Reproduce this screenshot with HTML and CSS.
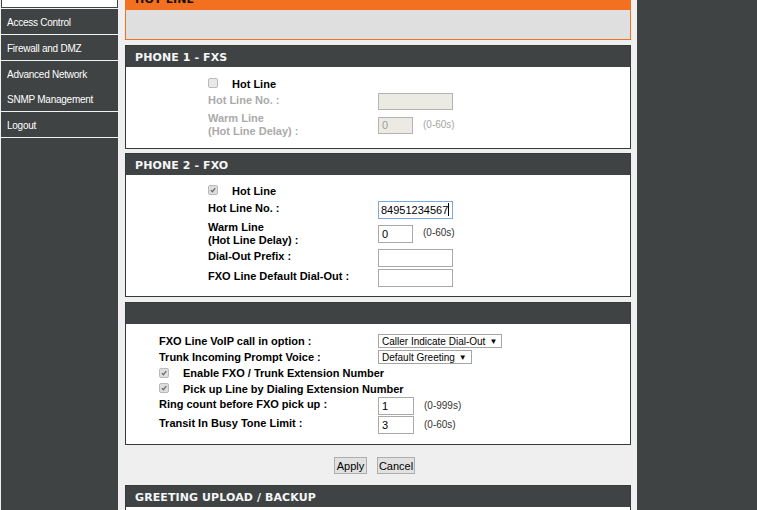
FILE: index.html
```html
<!DOCTYPE html>
<html lang="en">
<head>
<meta charset="utf-8">
<title>Hot Line</title>
<link rel="stylesheet" href="styles.css">
</head>
<body>
<div class="page">
  <nav class="sidebar">
    <div class="nav-cur"></div>
    <a class="nav-item">Access Control</a>
    <a class="nav-item">Firewall and DMZ</a>
    <div class="nav-group">
      <a class="nav-sub">Advanced Network</a>
      <a class="nav-sub">SNMP Management</a>
    </div>
    <a class="nav-item nav-last">Logout</a>
  </nav>

  <main class="content">
    <section class="hot">
      <div class="hot-head"><span>HOT LINE</span></div>
      <div class="hot-body"></div>
    </section>

    <section class="sec sec-p1">
      <h2 class="sec-head">PHONE 1 - FXS</h2>
      <div class="sec-body body-p1">
        <div class="row h16">
          <div class="chk-line"><span class="cb"></span><span class="chk-text">Hot Line</span></div>
        </div>
        <div class="row h18">
          <span class="lbl dis">Hot Line No. :</span>
          <span class="inp inp-dis w76 h17"></span>
        </div>
        <div class="row h29">
          <span class="lbl dis two">Warm Line<br>(Hot Line Delay) :</span>
          <span class="inp inp-dis w35 h17">0</span>
          <span class="hint dis">(0-60s)</span>
        </div>
      </div>
    </section>

    <section class="sec sec-p2">
      <h2 class="sec-head">PHONE 2 - FXO</h2>
      <div class="sec-body body-p2">
        <div class="row h16">
          <div class="chk-line"><span class="cb cb-on"><svg viewBox="0 0 10 10" width="10" height="10"><path d="M2.3 5.2 L4.2 7.1 L7.8 2.6" fill="none" stroke="#6a6a6a" stroke-width="1.6"/></svg></span><span class="chk-text">Hot Line</span></div>
        </div>
        <div class="row h20">
          <span class="lbl">Hot Line No. :</span>
          <span class="inp inp-focus w76">84951234567<span class="caret"></span></span>
        </div>
        <div class="row h28">
          <span class="lbl two">Warm Line<br>(Hot Line Delay) :</span>
          <span class="inp w35">0</span>
          <span class="hint">(0-60s)</span>
        </div>
        <div class="row h20">
          <span class="lbl">Dial-Out Prefix :</span>
          <span class="inp w76"></span>
        </div>
        <div class="row h20">
          <span class="lbl">FXO Line Default Dial-Out :</span>
          <span class="inp w76"></span>
        </div>
      </div>
    </section>

    <section class="sec sec-p3">
      <h2 class="sec-head"></h2>
      <div class="sec-body body-p3">
        <div class="row row3 h16">
          <span class="lbl">FXO Line VoIP call in option :</span>
          <span class="sel">Caller Indicate Dial-Out<span class="arr">▼</span></span>
        </div>
        <div class="row row3 h16">
          <span class="lbl">Trunk Incoming Prompt Voice :</span>
          <span class="sel">Default Greeting<span class="arr">▼</span></span>
        </div>
        <div class="row row3 h15">
          <div class="chk-line"><span class="cb cb-on"><svg viewBox="0 0 10 10" width="10" height="10"><path d="M2.3 5.2 L4.2 7.1 L7.8 2.6" fill="none" stroke="#6a6a6a" stroke-width="1.6"/></svg></span><span class="chk-text">Enable FXO / Trunk Extension Number</span></div>
        </div>
        <div class="row row3 h16">
          <div class="chk-line"><span class="cb cb-on"><svg viewBox="0 0 10 10" width="10" height="10"><path d="M2.3 5.2 L4.2 7.1 L7.8 2.6" fill="none" stroke="#6a6a6a" stroke-width="1.6"/></svg></span><span class="chk-text">Pick up Line by Dialing Extension Number</span></div>
        </div>
        <div class="row row3 h19">
          <span class="lbl lbl-up">Ring count before FXO pick up :</span>
          <span class="inp w36">1</span>
          <span class="hint">(0-999s)</span>
        </div>
        <div class="row row3 h19">
          <span class="lbl lbl-up">Transit In Busy Tone Limit :</span>
          <span class="inp w36">3</span>
          <span class="hint">(0-60s)</span>
        </div>
      </div>
    </section>

    <div class="buttons">
      <button class="btn w33" type="button">Apply</button>
      <button class="btn w38" type="button">Cancel</button>
    </div>

    <section class="sec sec-greet">
      <h2 class="sec-head">GREETING UPLOAD / BACKUP</h2>
      <div class="sec-body body-greet"></div>
    </section>
  </main>

  <div class="right-pane"></div>
</div>
</body>
</html>
```

FILE: styles.css
```css
html, body {
  margin: 0;
  padding: 0;
  height: 100%;
  overflow: hidden;
}

body {
  background: #efefef;
  font-family: "Liberation Sans", Arial, sans-serif;
  font-size: 11px;
  color: #000;
}

.page {
  display: flex;
  height: 510px;
  align-items: stretch;
}

/* ---------- sidebar ---------- */
.sidebar {
  width: 117px;
  margin-left: 1px;
  background: #404343;
  display: flex;
  flex-direction: column;
}

.nav-cur {
  height: 8px;
  box-sizing: border-box;
  background: #fff;
  border: 1px solid #404343;
  border-top: 0;
}

.nav-item,
.nav-sub {
  display: block;
  height: 25px;
  line-height: 27px;
  padding-left: 6px;
  color: #fff;
  font-size: 10px;
  letter-spacing: -0.25px;
  overflow: hidden;
  white-space: nowrap;
}

.nav-item,
.nav-group {
  border-top: 1px solid #f2f2f2;
}

.nav-last {
  border-bottom: 1px solid #f2f2f2;
}

/* ---------- main column ---------- */
.content {
  width: 506px;
  margin-left: 7px;
  margin-right: 6px;
  flex: none;
}

.right-pane {
  flex: 1;
  background: #404343;
}

/* hot line box (scrolled) */
.hot {
  border: 1px solid #f47021;
  border-top: 0;
  margin-bottom: 5px;
}

.hot-head {
  height: 10px;
  background: #f47021;
  overflow: hidden;
  display: flex;
  align-items: flex-end;
  padding-left: 9px;
}

.hot-head span {
  font-family: "DejaVu Sans", Verdana, sans-serif;
  font-weight: bold;
  font-size: 11px;
  line-height: 11px;
  margin-bottom: 5px;
  letter-spacing: 0.2px;
  color: #111;
}

.hot-body {
  height: 29px;
  background: #dfdfdf;
}

/* sections */
.sec {
  border: 1px solid #363939;
}

.sec-p1 { margin-bottom: 4px; }
.sec-p2 { margin-bottom: 5px; }

.sec-greet {
  border-bottom: 0;
}

.sec-head {
  margin: 0;
  height: 20px;
  padding-top: 1px;
  line-height: 21px;
  background: #404343;
  color: #f4f6f8;
  font-family: "DejaVu Sans", Verdana, sans-serif;
  font-weight: bold;
  font-size: 11px;
  padding-left: 9px;
  letter-spacing: 0.1px;
  overflow: hidden;
}

.sec-body {
  background: #fff;
}

.body-p1 { padding: 9px 0 9px 82px; }
.body-p2 { padding: 8px 0 9px 82px; }
.body-p3 { padding: 9px 0 10px 33px; }
.body-greet { height: 3px; }

/* rows */
.row {
  display: grid;
  grid-template-columns: 170px auto 1fr;
  align-items: center;
}

.row3 {
  grid-template-columns: 219px auto 1fr;
}

.h15 { height: 15px; }
.h16 { height: 16px; }
.h18 { height: 18px; }
.h19 { height: 19px; }
.h20 { height: 20px; }
.h28 { height: 28px; }
.h29 { height: 29px; }

.lbl {
  font-weight: bold;
  font-size: 11px;
  line-height: 13px;
  white-space: nowrap;
  margin-top: -2px;
}

.lbl.two {
  margin-top: 1px;
}

.row3 .lbl {
  margin-top: 0;
}

.row3 .lbl-up {
  margin-top: -3px;
}

.dis {
  color: #aaaaaa;
}

.chk-line {
  grid-column: 1 / 4;
  display: flex;
  align-items: center;
  white-space: nowrap;
}

.row3 .chk-line {
  padding-top: 2px;
}

.cb {
  width: 10px;
  height: 10px;
  box-sizing: border-box;
  border: 1px solid #b9b9b9;
  border-radius: 2px;
  background: #e9e9e9;
  display: inline-flex;
  align-items: center;
  justify-content: center;
  margin-top: -2px;
}

.cb svg {
  display: block;
  width: 8px;
  height: 8px;
}

.cb-on {
  background: #dedede;
}

.chk-text {
  margin-left: 14px;
  font-weight: bold;
  font-size: 11px;
  line-height: 13px;
}

/* inputs */
.inp {
  display: flex;
  align-items: center;
  box-sizing: border-box;
  height: 18px;
  border: 1px solid #a9a9a9;
  background: #fff;
  padding-left: 3px;
  font-size: 11px;
  color: #000;
  white-space: nowrap;
  margin-top: 1px;
}

.h17 { height: 17px; }
.w35 { width: 35px; }
.w36 { width: 36px; }
.w76 { width: 75px; }

.inp-dis {
  background: #ebebe4;
  border-color: #b4b4b4;
  color: #9d9d9d;
}

.inp-focus {
  border-color: #7aa7e6;
  padding-left: 2px;
}

.caret {
  display: inline-block;
  width: 1px;
  height: 13px;
  background: #000;
}

.hint {
  margin-left: 10px;
  font-size: 10px;
  color: #333;
  white-space: nowrap;
  margin-top: -1px;
}

.hint.dis {
  color: #a5a5a5;
}

.sel {
  display: inline-flex;
  align-items: center;
  justify-self: start;
  box-sizing: border-box;
  height: 14px;
  border: 1px solid #a5a5a5;
  background: #fff;
  font-size: 10px;
  padding: 0 4px 0 3px;
  white-space: nowrap;
}

.arr {
  font-size: 8px;
  margin-left: 4px;
}

/* buttons */
.buttons {
  display: flex;
  justify-content: center;
  gap: 10px;
  padding-right: 7px;
  margin: 12px 0 11px;
}

.btn {
  height: 17px;
  box-sizing: border-box;
  padding: 0;
  border: 1px solid #adadad;
  background: #e1e1e1;
  font-family: "Liberation Sans", Arial, sans-serif;
  font-size: 11px;
  color: #000;
  border-radius: 0;
}

.w33 { width: 33px; }
.w38 { width: 38px; }
```
